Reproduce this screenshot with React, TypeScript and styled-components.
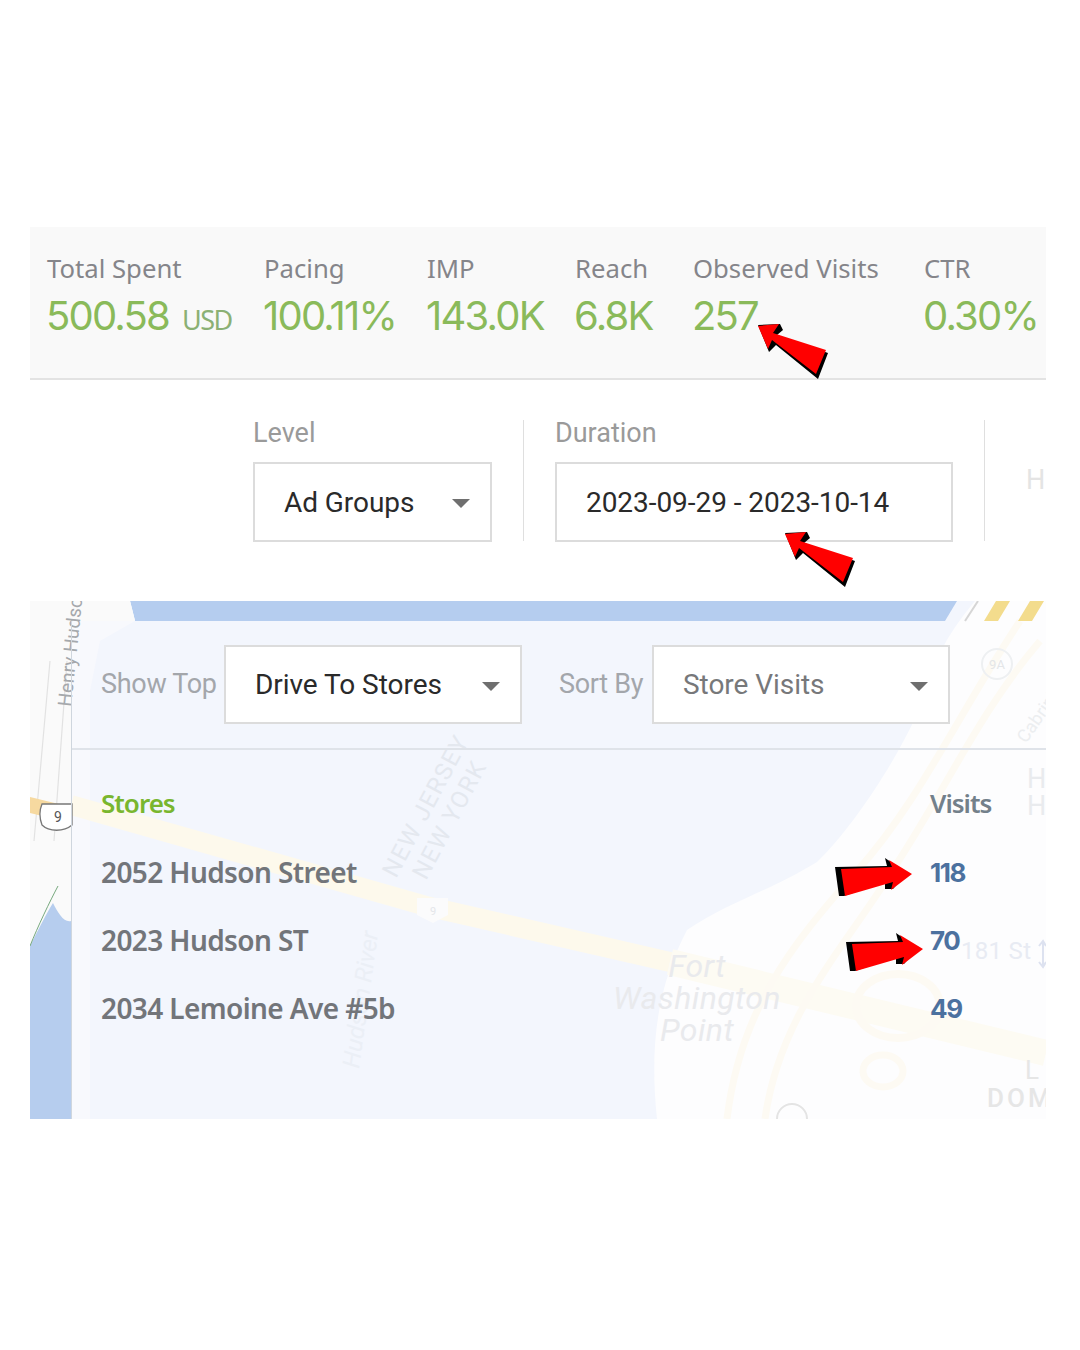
import React from "react";
import styled, { createGlobalStyle } from "styled-components";

const Global = createGlobalStyle`
  html, body { margin: 0; padding: 0; background: #fff; }
  body { font-family: "Noto Sans", "Liberation Sans", sans-serif; }
`;

const Page = styled.div`
  box-sizing: border-box;
  width: 1080px;
  height: 1350px;
  padding: 227px 34px 0 30px;
  display: flex;
  flex-direction: column;
  overflow: hidden;
`;

const StatsBar = styled.section`
  box-sizing: border-box;
  height: 153px;
  background: #f9f9f9;
  border-bottom: 2px solid #e3e3e3;
  display: flex;
  padding: 24px 0 0 17px;
`;

const Stat = styled.div<{ $w: number }>`
  width: ${(p) => p.$w}px;
  flex: none;
`;

const StatLabel = styled.div`
  font-family: "Noto Sans", sans-serif;
  font-size: 25.7px;
  line-height: 36px;
  color: #85858a;
  white-space: nowrap;
`;

const StatValue = styled.div`
  font-family: "Inter", sans-serif;
  font-size: 40px;
  line-height: 48px;
  font-weight: 400;
  color: #8aba5a;
  white-space: nowrap;
  margin: 5px 0 0 -1px;
  letter-spacing: -1.8px;
`;

const Unit = styled.span`
  font-family: "Noto Sans", sans-serif;
  font-size: 27px;
  margin-left: 13px;
  color: #8bb074;
  letter-spacing: -1.5px;
`;

const Arrow = styled.svg`
  position: absolute;
  overflow: visible;
  left: 0;
  top: 0;
  pointer-events: none;
  z-index: 5;
`;

const FilterRow = styled.section`
  display: flex;
  flex: none;
  height: 221px;
  position: relative;
  padding-left: 223px;
`;

const Field = styled.div<{ $w: number; $divider?: boolean }>`
  width: ${(p) => p.$w}px;
  flex: none;
  margin-top: 38px;
  height: 123px;
  margin-right: 63px;
  position: relative;
  &::after {
    content: "";
    display: ${(p) => (p.$divider ? "block" : "none")};
    position: absolute;
    right: -32px;
    top: 2px;
    bottom: 0;
    width: 1px;
    background: #dfdfdf;
  }
`;

const FieldLabel = styled.div`
  font-family: "Roboto", sans-serif;
  font-size: 27px;
  line-height: 30px;
  color: #9a9a9a;
`;

const Select = styled.div<{ $dim?: boolean }>`
  box-sizing: border-box;
  height: 80px;
  background: #fff;
  border: 2px solid #dcdcdc;
  display: flex;
  align-items: center;
  justify-content: space-between;
  padding: 0 20px 0 29px;
  font-family: "Roboto", sans-serif;
  font-size: 28px;
  letter-spacing: -0.05px;
  color: ${(p) => (p.$dim ? "#77787a" : "#2a2a2a")};
  white-space: nowrap;
`;

const Caret = styled.span`
  width: 0;
  height: 0;
  border-left: 9px solid transparent;
  border-right: 9px solid transparent;
  border-top: 9px solid #6f6f6f;
  margin-top: 3px;
`;

const SelectSlot = styled.div`
  margin-top: 14px;
`;

const GhostLetter = styled.div`
  position: absolute;
  right: 0;
  top: 84px;
  width: 20px;
  font-family: "Roboto", sans-serif;
  font-size: 27px;
  color: #e4e4e4;
  overflow: hidden;
`;

const MapPanel = styled.section`
  position: relative;
  flex: none;
  height: 518px;
  overflow: hidden;
  background: #f3f6fd;
`;

const MapArt = styled.svg`
  position: absolute;
  inset: 0;
  width: 100%;
  height: 100%;
`;

const Overlay = styled.div`
  position: relative;
  margin: 20px 0 0 41px;
  height: 498px;
  border-left: 1px solid #cfd6de;
  padding-left: 29px;
  display: flex;
  flex-direction: column;
`;

const Toolbar = styled.div`
  height: 129px;
  box-sizing: border-box;
  margin-left: -29px;
  padding: 24px 0 0 29px;
  border-bottom: 2px solid #dfe3e9;
  display: flex;
  align-items: flex-start;
`;

const ToolLabel = styled.div<{ $w: number }>`
  width: ${(p) => p.$w}px;
  flex: none;
  height: 78px;
  display: flex;
  align-items: center;
  font-family: "Roboto", sans-serif;
  font-size: 27px;
  color: #a3a6ab;
  white-space: nowrap;
  letter-spacing: -0.3px;
`;

const ToolSelect = styled(Select)<{ $w: number }>`
  width: ${(p) => p.$w}px;
  height: 79px;
  flex: none;
  margin-right: 37px;
`;

const Table = styled.div`
  display: flex;
  flex-direction: column;
  padding-top: 28px;
`;

const Row = styled.div`
  height: 68px;
  display: grid;
  grid-template-columns: 829px 1fr;
  align-items: center;
`;

const HeadRow = styled(Row)`
  height: 50px;
  margin-bottom: 10px;
`;

const HeadCell = styled.div<{ $green?: boolean }>`
  font-family: "Noto Sans", sans-serif;
  font-size: 26px;
  font-weight: 600;
  letter-spacing: -1px;
  color: ${(p) => (p.$green ? "#79b62f" : "#73808a")};
`;

const StoreName = styled.div`
  font-family: "Noto Sans", sans-serif;
  font-size: 28px;
  font-weight: 600;
  letter-spacing: -0.6px;
  color: #72757a;
  white-space: nowrap;
`;

const Count = styled.div`
  font-family: "Inter", sans-serif;
  font-size: 26px;
  font-weight: 700;
  letter-spacing: -1.4px;
  color: #4c719f;
`;

const stats = [
  { label: "Total Spent", value: "500.58", unit: "USD", w: 217 },
  { label: "Pacing", value: "100.11%", w: 163 },
  { label: "IMP", value: "143.0K", w: 148 },
  { label: "Reach", value: "6.8K", w: 118 },
  { label: "Observed Visits", value: "257", w: 231 },
  { label: "CTR", value: "0.30%", w: 120 },
];

const stores = [
  { name: "2052 Hudson Street", visits: "118" },
  { name: "2023 Hudson ST", visits: "70" },
  { name: "2034 Lemoine Ave #5b", visits: "49" },
];

function ArrowUpLeft({ x, y }: { x: number; y: number }) {
  return (
    <g transform={`translate(${x} ${y})`}>
      <polygon fill="#000" points="0,0 22,-1 25,5 19,10 70,28 60,54 18,20 11,27" />
      <polygon fill="#f00" points="0,1 21,-1 15,8 68,25 58,49 14,15 10,24" />
    </g>
  );
}

function ArrowRight({ x, y }: { x: number; y: number }) {
  return (
    <g transform={`translate(${x} ${y})`}>
      <polygon fill="#000" points="0,7 52,6 50,-2 72,13 58,29 50,29 50,22 9,36 4,36" />
      <polygon fill="#f00" points="6,9 57,7 54,0 77,14 56,30 58,22 10,36" />
    </g>
  );
}

function MapBackground() {
  return (
    <MapArt viewBox="0 0 1016 518" preserveAspectRatio="none">
      <rect width="1016" height="518" fill="#f3f6fd" />
      <path d="M100 0H927L915 20H105Z" fill="#b5cdef" />
      <path d="M0 0H100L105 20 70 40 60 90V518H0Z" fill="#f8f9fd" />
      <path d="M0 0H100L105 20H41V518H0Z" fill="#fafafa" />
      <path d="M20 60L4 240M37 60L24 240" stroke="#e2e2e2" strokeWidth="1.2" fill="none" />
      <path d="M0 345C10 325 18 310 23 302 28 312 34 322 41 320V518H0Z" fill="#b6cdee" />
      <path d="M0 345C8 325 20 300 28 285" stroke="#77a97e" strokeWidth="1" fill="none" />
      <path d="M945 0H1016V518H627C620 450 625 390 657 329 700 300 740 290 787 261 830 220 885 130 900 80 906 60 912 40 945 0Z" fill="#fdfdfe" />
      <path d="M41 204L400 306 640 361" stroke="#fdf9ec" strokeWidth="20" fill="none" />
      <path d="M640 361L1016 452" stroke="#fdfbf3" strokeWidth="26" fill="none" />
      <path d="M0 196L41 206V222L0 212Z" fill="#f6d9a0" />
      <path d="M697 518C710 410 760 345 827 270 890 200 930 110 990 20" stroke="#fdfaf3" strokeWidth="7" fill="none" />
      <path d="M735 518C750 410 820 340 862 270 915 190 950 110 1010 40" stroke="#fdfaf3" strokeWidth="7" fill="none" />
      <ellipse cx="868" cy="405" rx="42" ry="32" stroke="#fdfaf3" strokeWidth="8" fill="none" />
      <ellipse cx="853" cy="470" rx="20" ry="16" stroke="#fdfaf3" strokeWidth="7" fill="none" />
      <path d="M948 0L935 20" stroke="#d6d6d6" strokeWidth="2" />
      <path d="M954 20L966 0H980L968 20ZM988 20L1000 0H1014L1002 20Z" fill="#f3dc8d" />
      <g fontFamily="Roboto, sans-serif">
        <text transform="translate(41 106) rotate(-84)" fontSize="19" fill="#a5a8ac">Henry Hudson</text>
        <path d="M12 203H42V224C34 231 19 231 12 224 9 216 9 210 12 203Z" fill="#fff" stroke="#777" strokeWidth="1.3" />
        <text x="28" y="221" fontSize="14" fill="#555" textAnchor="middle">9</text>
        <text transform="translate(366 278) rotate(-62)" fontSize="24" fill="#e4e8ef" letterSpacing="1.5">NEW JERSEY</text>
        <text transform="translate(396 280) rotate(-62)" fontSize="24" fill="#e4e8ef" letterSpacing="1.5">NEW YORK</text>
        <text transform="translate(329 468) rotate(-82)" fontSize="24" fontStyle="italic" fill="#ebeff6">Hudson River</text>
        <path d="M387 297H418V314L403 322 387 314Z" fill="#fbfbfc" />
        <text x="403" y="314" fontSize="11" fill="#e4e6ea" textAnchor="middle">9</text>
        <text x="667" y="376" fontSize="32" fontStyle="italic" fill="#e9eaed" textAnchor="middle" letterSpacing="0.4">Fort</text>
        <text x="667" y="408" fontSize="32" fontStyle="italic" fill="#e9eaed" textAnchor="middle" letterSpacing="0.4">Washington</text>
        <text x="667" y="440" fontSize="32" fontStyle="italic" fill="#e9eaed" textAnchor="middle" letterSpacing="0.4">Point</text>
        <text x="931" y="358" fontSize="24" fill="#e8ebf3" letterSpacing="0.3">181 St</text>
        <path d="M1013 340V366M1009 345L1013 340 1016 345M1009 361L1013 366 1016 361" stroke="#dde2f0" strokeWidth="2" fill="none" />
        <text x="997" y="187" fontSize="27" fill="#e9ebee">H</text>
        <text x="997" y="214" fontSize="27" fill="#e9ebee">H</text>
        <text x="995" y="478" fontSize="26" fill="#e6e6e6">L</text>
        <text x="957" y="506" fontSize="26" fontWeight="500" fill="#e6e6e6" letterSpacing="3">DOM</text>
        <circle cx="967" cy="63" r="15" fill="none" stroke="#eef0f2" strokeWidth="2" />
        <text x="967" y="68" fontSize="13" fill="#e4e6e8" textAnchor="middle">9A</text>
        <circle cx="762" cy="518" r="15" fill="none" stroke="#e4e4e4" strokeWidth="2" />
        <text transform="translate(996 143) rotate(-55)" fontSize="18" fill="#eceef0">Cabrini</text>
      </g>
    </MapArt>
  );
}

export default function App() {
  return (
    <>
      <Global />
      <Page>
        <StatsBar>
          {stats.map((s) => (
            <Stat key={s.label} $w={s.w}>
              <StatLabel>{s.label}</StatLabel>
              <StatValue>
                {s.value}
                {s.unit && <Unit>{s.unit}</Unit>}
              </StatValue>
            </Stat>
          ))}
        </StatsBar>
        <FilterRow>
          <Field $w={239} $divider>
            <FieldLabel>Level</FieldLabel>
            <SelectSlot>
              <Select>
                Ad Groups
                <Caret />
              </Select>
            </SelectSlot>
          </Field>
          <Field $w={398} $divider>
            <FieldLabel>Duration</FieldLabel>
            <SelectSlot>
              <Select>2023-09-29 - 2023-10-14</Select>
            </SelectSlot>
          </Field>
          <GhostLetter>H</GhostLetter>
        </FilterRow>
        <MapPanel>
          <MapBackground />
          <Overlay>
            <Toolbar>
              <ToolLabel $w={123}>Show Top</ToolLabel>
              <ToolSelect $w={298}>
                Drive To Stores
                <Caret />
              </ToolSelect>
              <ToolLabel $w={93}>Sort By</ToolLabel>
              <ToolSelect $w={298} $dim>
                Store Visits
                <Caret />
              </ToolSelect>
            </Toolbar>
            <Table>
              <HeadRow>
                <HeadCell $green>Stores</HeadCell>
                <HeadCell>Visits</HeadCell>
              </HeadRow>
              {stores.map((s) => (
                <Row key={s.name}>
                  <StoreName>{s.name}</StoreName>
                  <Count>{s.visits}</Count>
                </Row>
              ))}
            </Table>
          </Overlay>
        </MapPanel>
      </Page>
      <Arrow width="1080" height="1350">
        <ArrowUpLeft x={758} y={325} />
        <ArrowUpLeft x={785} y={533} />
        <ArrowRight x={835} y={860} />
        <ArrowRight x={846} y={935} />
      </Arrow>
    </>
  );
}
